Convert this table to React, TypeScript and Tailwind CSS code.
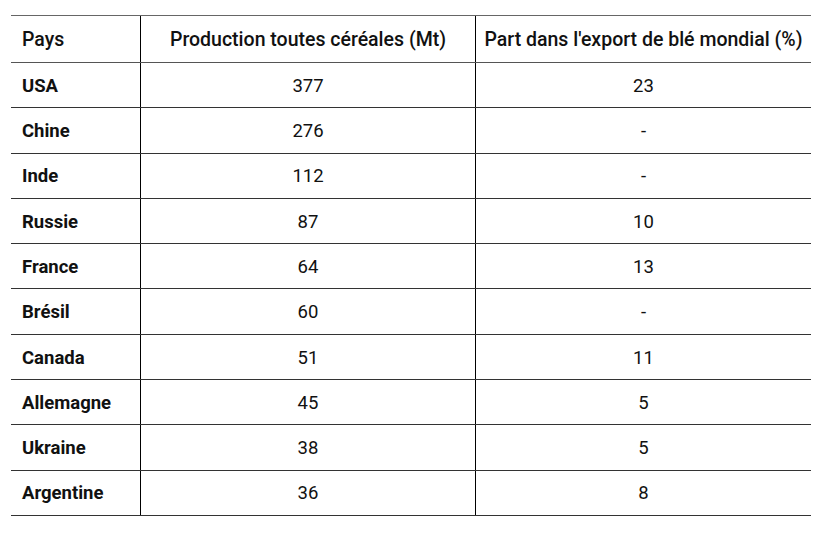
const rows: [string, string, string][] = [
  ["USA", "377", "23"],
  ["Chine", "276", "-"],
  ["Inde", "112", "-"],
  ["Russie", "87", "10"],
  ["France", "64", "13"],
  ["Brésil", "60", "-"],
  ["Canada", "51", "11"],
  ["Allemagne", "45", "5"],
  ["Ukraine", "38", "5"],
  ["Argentine", "36", "8"],
];

export default function App() {
  return (
    <div className="w-[828px] h-[538px] bg-white pt-[15px] pl-[11px] font-['Roboto',sans-serif] text-[18.5px] text-[#111]">
      <div className="w-[800px] border-t border-[#666]">
        <div className="grid grid-cols-[130px_335px_335px] h-[47px] border-b border-[#555] font-medium text-[19.5px]">
          <div className="flex items-center pl-[11px] pt-[2px] border-r border-black">Pays</div>
          <div className="flex items-center justify-center pt-[2px] border-r border-black">
            Production toutes céréales (Mt)
          </div>
          <div className="flex items-center justify-center pt-[2px]">Part dans l'export de blé mondial (%)</div>
        </div>
        {rows.map(([pays, prod, part]) => (
          <div
            key={pays}
            className="grid grid-cols-[130px_335px_335px] h-[45.3px] border-b border-[#333]"
          >
            <div className="flex items-center pl-[11px] pt-[3px] border-r border-black font-bold">{pays}</div>
            <div className="flex items-center justify-center pt-[3px] border-r border-black">{prod}</div>
            <div className="flex items-center justify-center pt-[3px]">{part}</div>
          </div>
        ))}
      </div>
    </div>
  );
}
